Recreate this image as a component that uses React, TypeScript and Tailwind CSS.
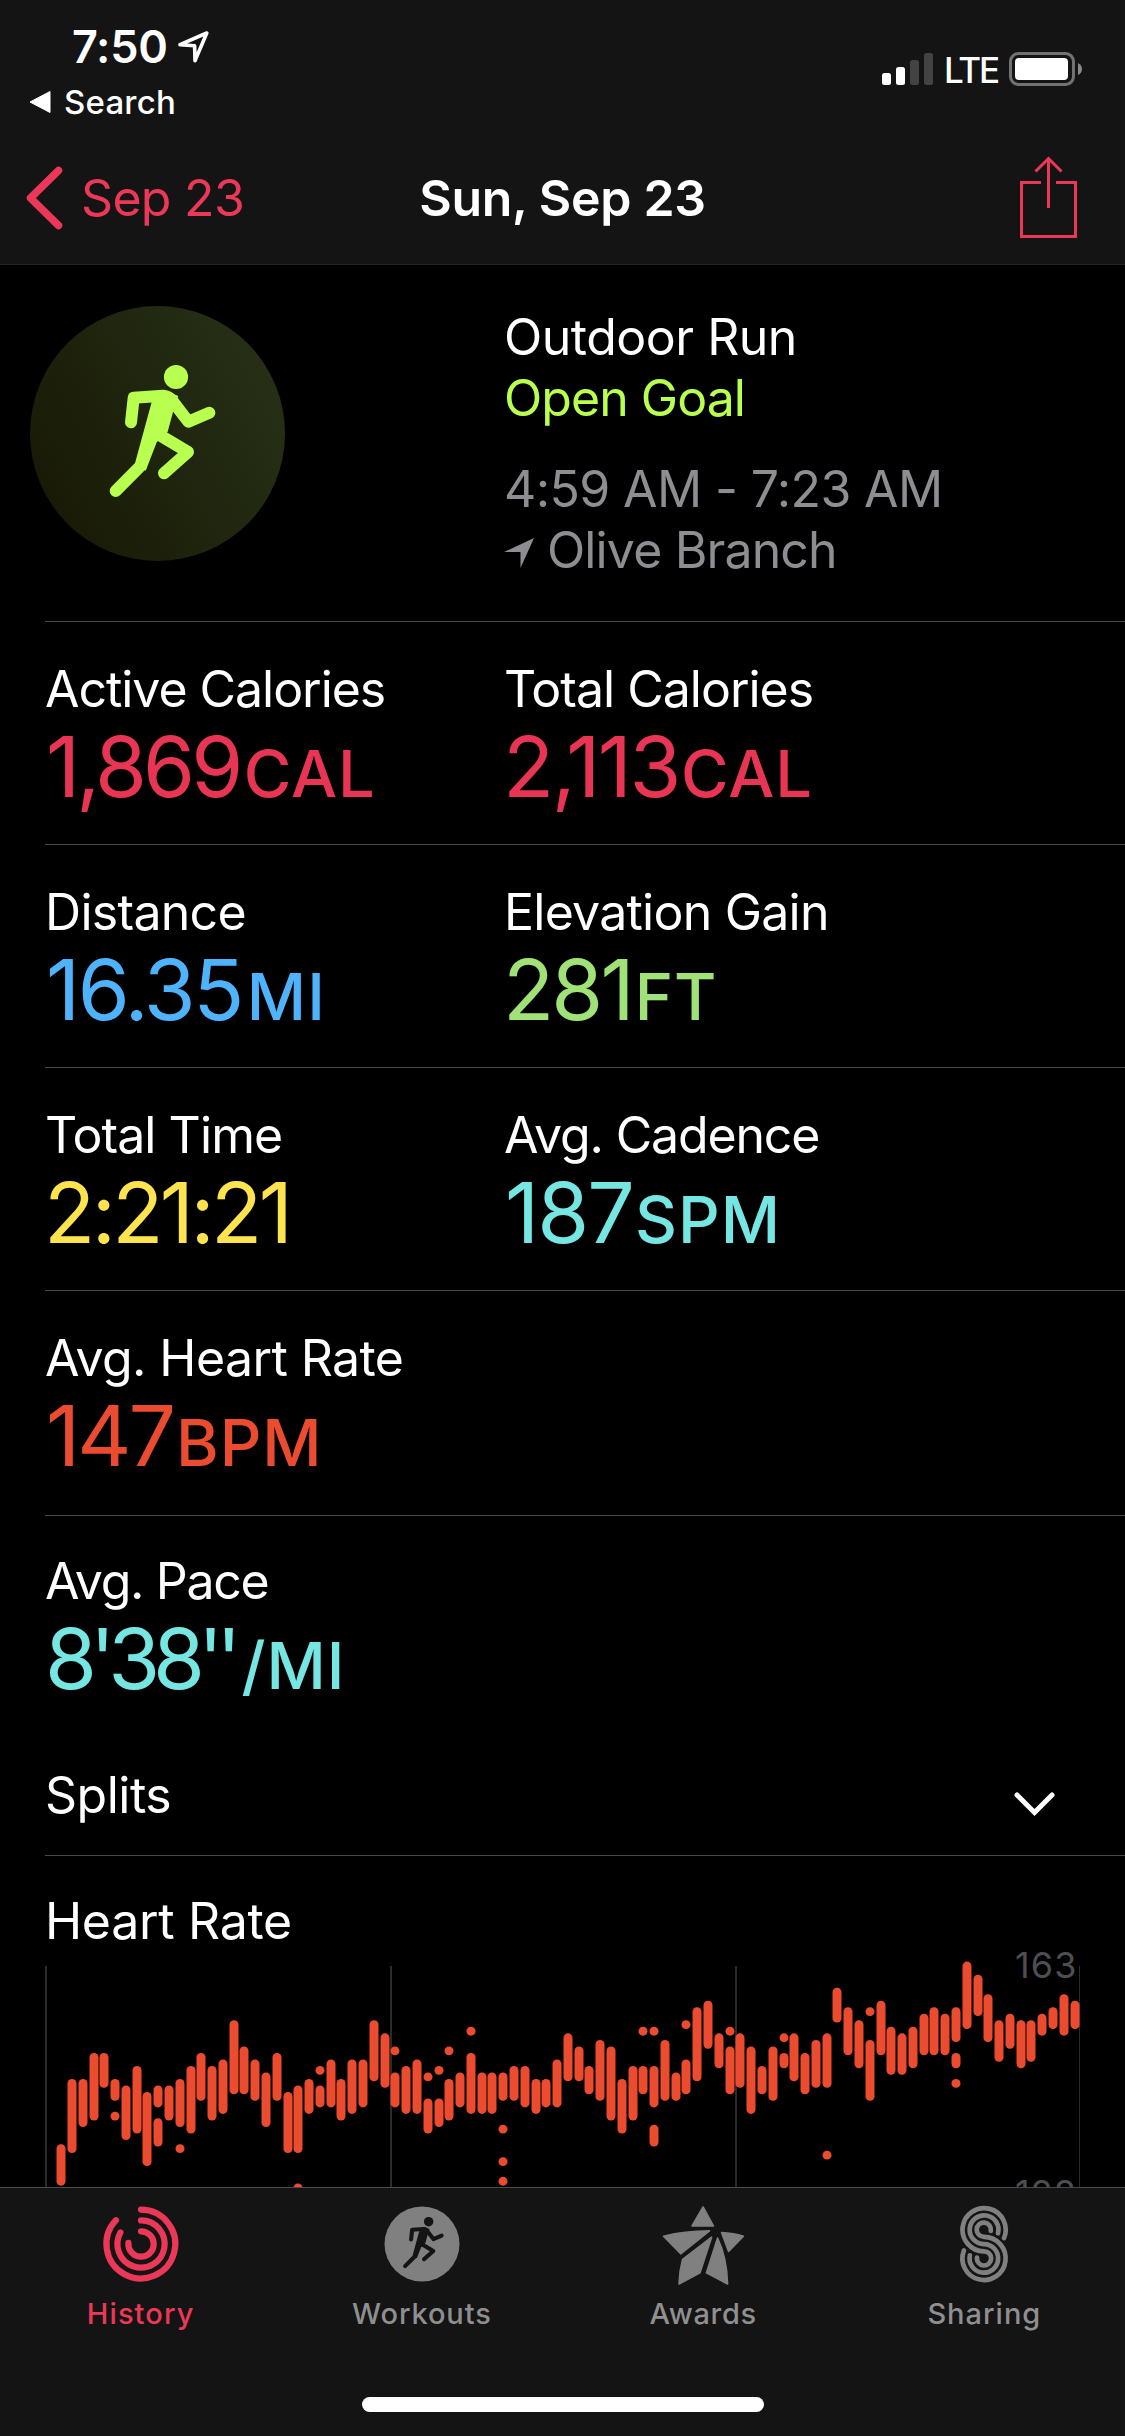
import React from 'react';
import clsx from 'clsx';

type Metric = {
  label: string;
  labelClass: string;
  value: string;
  valueClass: string;
  unit?: string;
  unitClass?: string;
  color: string;
};

const metricRows: { className: string; metrics: Metric[] }[] = [
  {
    className: 'h-[223px] pt-[37px]',
    metrics: [
      {
        label: 'Active Calories',
        labelClass: 'tracking-[-1.04px]',
        value: '1,869',
        valueClass: 'ml-px tracking-[-3.8px]',
        unit: 'CAL',
        unitClass: 'ml-1',
        color: 'text-[#e83553]',
      },
      {
        label: 'Total Calories',
        labelClass: 'tracking-[-1px]',
        value: '2,113',
        valueClass: '-ml-px tracking-[-2.5px]',
        unit: 'CAL',
        unitClass: 'ml-0.5',
        color: 'text-[#e83553]',
      },
    ],
  },
  {
    className: 'h-[223px] pt-[37px]',
    metrics: [
      {
        label: 'Distance',
        labelClass: 'tracking-[-0.7px]',
        value: '16.35',
        valueClass: 'ml-px tracking-[-2.5px]',
        unit: 'MI',
        unitClass: 'ml-[5px]',
        color: 'text-[#4fb3fb]',
      },
      {
        label: 'Elevation Gain',
        labelClass: 'tracking-[-0.76px]',
        value: '281',
        valueClass: '-ml-px tracking-[-2.9px]',
        unit: 'FT',
        unitClass: 'ml-[3px]',
        color: 'text-[#a0e277]',
      },
    ],
  },
  {
    className: 'h-[223px] pt-[37px]',
    metrics: [
      {
        label: 'Total Time',
        labelClass: 'tracking-[-0.93px]',
        value: '2:21:21',
        valueClass: '-ml-px tracking-[-3.6px]',
        color: 'text-[#fde44f]',
      },
      {
        label: 'Avg. Cadence',
        labelClass: 'tracking-[-1.14px]',
        value: '187',
        valueClass: 'ml-px tracking-[-1.9px]',
        unit: 'SPM',
        unitClass: 'ml-0.5',
        color: 'text-[#76e6e3]',
      },
    ],
  },
  {
    className: 'h-[225px] pt-[37px]',
    metrics: [
      {
        label: 'Avg. Heart Rate',
        labelClass: 'tracking-[-0.6px]',
        value: '147',
        valueClass: 'ml-px tracking-[-3px]',
        unit: 'BPM',
        unitClass: 'ml-[3px]',
        color: 'text-[#eb4b2f]',
      },
    ],
  },
  {
    className: 'h-[223px] pt-[35px]',
    metrics: [
      {
        label: 'Avg. Pace',
        labelClass: 'tracking-[-1.3px]',
        value: "8'38''",
        valueClass: 'tracking-[-7px]',
        unit: '/MI',
        unitClass: 'ml-[7px]',
        color: 'text-[#76e6e3]',
      },
    ],
  },
];

const PEAK = 163;
const AXIS_STEP = 35;
const PX_PER_BEAT = 6.523;
const SLOT = 1035 / 96;

// One entry per slot. Each pair is the high and low reading, in beats below the peak.
const samples: number[][][] = [
  [[28, 33]], [[18, 28]], [[18, 24]], [[14, 23]], [[14, 18]], [[18, 20], [23, 23]], [[19, 26]], [[16, 25]],
  [[20, 30]], [[19, 21], [24, 27]], [[19, 23]], [[18, 24], [28, 28]], [[16, 25]], [[14, 20]], [[16, 23]], [[15, 22]],
  [[9, 19]], [[13, 19]], [[15, 20]], [[17, 24]], [[14, 20]], [[20, 28]], [[19, 28], [34, 34]], [[18, 22]],
  [[16, 16], [19, 21]], [[15, 21]], [[18, 23]], [[15, 22]], [[15, 21]], [[9, 17]], [[11, 18]], [[13, 13], [17, 21]],
  [[16, 22]], [[15, 22]], [[17, 17], [21, 25]], [[16, 16], [21, 24]], [[13, 13], [18, 23]], [[17, 21]],
  [[10, 10], [14, 22]], [[17, 22]], [[17, 22]], [[17, 20], [25, 25], [30, 30], [33, 33]], [[16, 20]], [[16, 21]],
  [[18, 22]], [[18, 21]], [[15, 21]], [[11, 17]], [[13, 17]], [[16, 19]], [[12, 20]], [[13, 23]],
  [[18, 25]], [[16, 23]], [[10, 10], [16, 19]], [[10, 10], [16, 21], [25, 27]], [[12, 20]], [[17, 20]],
  [[9, 9], [15, 19]], [[7, 17]], [[6, 12]], [[11, 15]], [[10, 10], [13, 19]], [[11, 18]], [[13, 22]], [[16, 19]],
  [[13, 20]], [[11, 11], [14, 15]], [[11, 17]], [[14, 19]], [[12, 18]], [[11, 18], [29, 29]], [[4, 8]], [[7, 13]],
  [[9, 15]], [[7, 7], [12, 20]], [[6, 13]], [[10, 16]], [[11, 16]], [[10, 15]], [[8, 13]], [[7, 13]],
  [[8, 13]], [[7, 11], [14, 15], [18, 18]], [[0, 9]], [[2, 7]], [[5, 11]], [[9, 14]], [[8, 12]], [[9, 15]],
  [[9, 14]], [[8, 10]], [[7, 9]], [[5, 10]], [[6, 9]],
];

// Drawn on a 255 unit square, centred the way it sits on the workout badge.
function Runner({ stroke = 12 }: { stroke?: number }) {
  return (
    <g fill="none" stroke="currentColor" strokeWidth={stroke} strokeLinecap="round" strokeLinejoin="round">
      <circle cx="146" cy="71" r="12.1" fill="currentColor" stroke="none" />
      <path d="M101 116.3L103.7 91.7L133.3 89.7Q139 90 142.5 95L158.3 115.7L179.3 106.7" />
      <path
        d="M121.7 96L105 157.3L115.7 164.7L126.7 136.3L137.7 125.7L143.3 105L148.3 90L134 84Z"
        fill="currentColor"
        stroke="none"
      />
      <path d="M111 159.5L85.7 185" />
      <path d="M132 130.5L158 146L134 167.3" />
    </g>
  );
}

function StatusBar() {
  return (
    <div className="flex h-[122px] justify-between pt-5 pl-[28px]">
      <div>
        <div className="flex h-[54px] pl-11">
          <span className="text-[45px] leading-[54px] font-semibold tracking-[-0.3px]">7:50</span>
          <svg className="mt-2.5 ml-2" width="34" height="34" viewBox="0 0 34 34" fill="none">
            <path
              d="M4 14.7L30.8 3L19 30.7L18.6 15.8Z"
              stroke="currentColor"
              strokeWidth="3.6"
              strokeLinejoin="round"
            />
          </svg>
        </div>
        <div className="mt-2 flex items-center">
          <svg width="23" height="24" viewBox="0 0 23 24">
            <path d="M2 12L22 1.5V22.5Z" fill="currentColor" stroke="currentColor" strokeLinejoin="round" />
          </svg>
          <span className="ml-[13px] text-[33px] leading-10 font-medium tracking-[0.2px]">Search</span>
        </div>
      </div>
      <div className="mt-8 mr-[42px] flex h-[34px]">
        <svg width="52" height="34" viewBox="0 0 52 34" fill="currentColor">
          <rect x="0" y="21" width="9" height="12" rx="2.5" />
          <rect x="14" y="15" width="9" height="18" rx="2.5" />
          <rect x="28" y="8" width="9" height="25" rx="2.5" fill="#434343" />
          <rect x="42" y="1" width="9" height="32" rx="2.5" fill="#434343" />
        </svg>
        <span className="ml-2.5 w-[58px] text-[35px] leading-[37px] font-medium tracking-[-2.2px]">LTE</span>
        <svg className="ml-[7px]" width="74" height="34" viewBox="0 0 74 34">
          <rect x="1.5" y="1.5" width="63" height="31" rx="8" fill="none" stroke="#727272" strokeWidth="3" />
          <rect x="6" y="6" width="53" height="22" rx="4" fill="currentColor" />
          <path d="M69 11Q73 13 73 17T69 23Z" fill="#8a8a8a" />
        </svg>
      </div>
    </div>
  );
}

function NavBar() {
  return (
    <div className="grid grid-cols-3 items-start pt-[46px] text-[50px] leading-[60px]">
      <div className="flex h-[60px] items-center pl-[25px] text-[#ec3858]">
        <svg width="38" height="64" viewBox="0 0 38 64" fill="none">
          <path
            d="M33.5 4.5L5.5 32L33.5 59.5"
            stroke="currentColor"
            strokeWidth="7.5"
            strokeLinecap="round"
            strokeLinejoin="round"
          />
        </svg>
        <span className="ml-[18px] tracking-[-0.7px]">Sep 23</span>
      </div>
      <h1 className="text-center font-semibold tracking-[-0.33px]">Sun, Sep 23</h1>
      <div className="flex justify-end pr-12 text-[#ec3858]">
        <svg className="-mt-3" width="57" height="83" viewBox="0 0 57 83" fill="none" stroke="currentColor" strokeWidth="3">
          <path d="M21 26.5H1.5V80.5H55.5V26.5H36" />
          <path d="M28.5 52V3" />
          <path d="M15.5 15.5L28.5 2.5L41.5 15.5" />
        </svg>
      </div>
    </div>
  );
}

function Summary() {
  return (
    <section className="flex h-[356px] pl-[30px]">
      <svg className="mt-[41px] text-[#b9ff4f]" width="255" height="255" viewBox="0 0 255 255">
        <defs>
          <linearGradient id="badge" x1="0.1" y1="0.75" x2="0.95" y2="0.3">
            <stop offset="0" stopColor="#191b06" />
            <stop offset="1" stopColor="#262f16" />
          </linearGradient>
        </defs>
        <circle cx="127.5" cy="127.5" r="127.5" fill="url(#badge)" />
        <Runner />
      </svg>
      <div className="mt-[42px] ml-[219px] text-[50px] leading-[61px]">
        <div className="tracking-[-0.5px]">Outdoor Run</div>
        <div className="tracking-[-0.95px] text-[#b9ff4f]">Open Goal</div>
        <div className="mt-[30px] tracking-[-0.62px] text-[#8d8d92]">4:59 AM - 7:23 AM</div>
        <div className="flex tracking-[-0.86px] text-[#8d8d92]">
          <svg className="mt-[18px] mr-[13px]" width="30" height="30" viewBox="0 0 30 30">
            <path d="M30 0L16.5 30V14L0 14Z" fill="currentColor" />
          </svg>
          Olive Branch
        </div>
      </div>
    </section>
  );
}

function MetricCell({ metric }: { metric: Metric }) {
  return (
    <div>
      <div className={clsx('text-[50px] leading-[60px]', metric.labelClass)}>{metric.label}</div>
      <div className={clsx('mt-1.5 flex items-baseline leading-[84px]', metric.color)}>
        <span className={clsx('text-[84px]', metric.valueClass)}>{metric.value}</span>
        {metric.unit && (
          <span className={clsx('text-[65px] font-medium tracking-[1px]', metric.unitClass)}>{metric.unit}</span>
        )}
      </div>
    </div>
  );
}

function HeartRateChart() {
  return (
    <svg className="block overflow-visible" width="1080" height="236" viewBox="0 -15 1080 236">
      <g fill="#2b2b2b">
        <rect x="0" y="0" width="2" height="221" />
        <rect x="345" y="0" width="2" height="221" />
        <rect x="690" y="0" width="2" height="221" />
        <rect x="1034" y="0" width="1" height="221" />
      </g>
      <g fill="#4e4e50" fontSize="36" letterSpacing="1.1">
        <text x="970" y="12">{PEAK}</text>
        <text x="970" y={12 + AXIS_STEP * PX_PER_BEAT}>{PEAK - AXIS_STEP}</text>
      </g>
      <g fill="#eb4b2f">
        {samples.map((ranges, i) =>
          ranges.map(([high, low]) => (
            <rect
              key={`${i}-${high}`}
              x={Math.round((i + 1.5) * SLOT) - 4.5}
              y={high * PX_PER_BEAT - 4.4}
              width="9"
              height={(low - high) * PX_PER_BEAT + 8.8}
              rx="4.4"
            />
          ))
        )}
      </g>
    </svg>
  );
}

function HistoryIcon() {
  return (
    <svg width="86" height="84" viewBox="-43 -40 86 84" fill="none" stroke="currentColor" strokeWidth="6.2" strokeLinecap="round">
      <path d="M0 -34.4A34.4 34.4 0 1 1 -25 -23.8" />
      <path d="M0 -23.6A23.6 23.6 0 1 1 -20.6 -11.5" />
      <path d="M0 -12.7A12.7 12.7 0 1 1 -12.6 -1.2" />
    </svg>
  );
}

function WorkoutsIcon() {
  return (
    <svg width="86" height="84" viewBox="-43 -40 86 84">
      <circle r="37.5" fill="#808080" />
      <g className="text-[#141414]" transform="translate(-50.3 -50) scale(0.39)">
        <Runner stroke={10.5} />
      </g>
    </svg>
  );
}

function AwardsIcon() {
  return (
    <svg width="86" height="84" viewBox="0 0 86 84" fill="#808080" stroke="#808080" strokeWidth="1.6" strokeLinejoin="round">
      <path d="M43.1 3L53.4 22H32Z" />
      <path d="M3.5 32.2Q25 27 49.5 26.8L20.7 49.8Z" />
      <path d="M61.6 28.6Q74 29.4 83.4 32.2L68.6 47.4Z" />
      <path d="M51.6 33.2L40 68.8L19 80Q19.4 67 22.6 55.3Z" />
      <path d="M57.6 34Q66.8 53 67.6 80L46.4 68.9Z" />
    </svg>
  );
}

function SharingIcon() {
  return (
    <svg width="86" height="84" viewBox="-19 -1.7 86 84" fill="none" stroke="#808080" strokeWidth="4.7" strokeLinecap="round">
      <path d="M44 32.4A21.6 21.6 0 1 0 24 45.6A7.1 7.1 0 1 1 17 51.8" />
      <path d="M38 27.6A14.4 14.4 0 1 0 24 38.4A14.3 14.3 0 1 1 9.9 49.6" />
      <path d="M30.8 25.2A7.1 7.1 0 1 0 24 31.1A21.6 21.6 0 1 1 3.9 44.8" />
    </svg>
  );
}

const tabs = [
  { name: 'History', icon: <HistoryIcon />, className: 'text-[#ec3858] tracking-[1.1px]' },
  { name: 'Workouts', icon: <WorkoutsIcon />, className: 'text-[#8f8f8f] tracking-[0.9px]' },
  { name: 'Awards', icon: <AwardsIcon />, className: 'text-[#8f8f8f] tracking-[0.7px]' },
  { name: 'Sharing', icon: <SharingIcon />, className: 'text-[#8f8f8f] tracking-[1px]' },
];

function TabBar() {
  return (
    <nav className="relative h-[249px] border-t border-[#4b4b4b] bg-[#141414]">
      <div className="grid h-[209px] grid-cols-4 pt-4">
        {tabs.map((tab) => (
          <div key={tab.name} className={clsx('flex flex-col items-center', tab.className)}>
            {tab.icon}
            <span className="mt-2 text-[29px] leading-9 font-medium">{tab.name}</span>
          </div>
        ))}
      </div>
      <div className="mx-auto h-[15px] w-[402px] rounded-full bg-white" />
    </nav>
  );
}

export default function App() {
  return (
    <div className="flex h-[2436px] w-[1125px] flex-col overflow-hidden bg-black font-[Inter,'Liberation_Sans',sans-serif] text-white">
      <header className="h-[265px] border-b border-[#262626] bg-[#141414]">
        <StatusBar />
        <NavBar />
      </header>

      <main className="h-[1922px]">
        <Summary />
        <div className="pl-[45px]">
          {metricRows.map((row) => (
            <div
              key={row.metrics[0].label}
              className={clsx('grid grid-cols-[459px_1fr] border-t border-[#48484a]', row.className)}
            >
              {row.metrics.map((metric) => (
                <MetricCell key={metric.label} metric={metric} />
              ))}
            </div>
          ))}

          <div className="flex h-[117px] justify-between pt-[27px] pr-[69px] text-[50px] leading-[60px] tracking-[-0.5px]">
            <span>Splits</span>
            <svg className="mt-[26px]" width="44" height="26" viewBox="0 0 44 26" fill="none">
              <path d="M5 4L22.5 21.5L40 4" stroke="currentColor" strokeWidth="5" strokeLinecap="round" />
            </svg>
          </div>

          <div className="border-t border-[#48484a] pt-[35px]">
            <div className="text-[50px] leading-[60px] tracking-[-0.3px]">Heart Rate</div>
            <HeartRateChart />
          </div>
        </div>
      </main>

      <TabBar />
    </div>
  );
}
